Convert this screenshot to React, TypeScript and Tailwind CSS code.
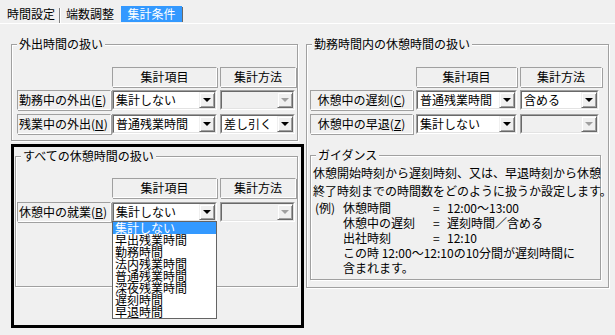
import type { ReactNode } from "react";

function GroupBox({ title, className, children }: { title: string; className: string; children?: ReactNode }) {
  return (
    <div className={`relative border border-[#a0a0a0] shadow-[inset_1px_1px_0_#fff,1px_1px_0_#fff] ${className}`}>
      <span className="absolute left-[5px] -top-[9px] px-[2px] bg-[#f0f0f0] leading-[16px] whitespace-nowrap">{title}</span>
      {children}
    </div>
  );
}

function Cell({ children, className }: { children?: ReactNode; className: string }) {
  return (
    <div
      className={`h-[20px] flex items-center border border-t-[#a0a0a0] border-l-[#a0a0a0] border-b-white border-r-white shadow-[1px_1px_0_#a0a0a0] leading-[16px] whitespace-nowrap ${className}`}
    >
      {children}
    </div>
  );
}

function Select({ value, disabled, className, children }: { value?: string; disabled?: boolean; className: string; children?: ReactNode }) {
  return (
    <div className={`relative h-[20px] border border-t-[#a0a0a0] border-l-[#a0a0a0] border-b-white border-r-white ${className}`}>
      <div
        className={`h-full flex items-center border border-t-[#696969] border-l-[#696969] border-b-[#e3e3e3] border-r-[#e3e3e3] ${disabled ? "bg-[#f0f0f0]" : "bg-white"}`}
      >
        <span className="flex-1 pl-[2px] leading-[16px] whitespace-nowrap overflow-hidden">{value}</span>
        <div className="w-[16px] h-full flex items-center justify-center bg-[#f0f0f0] border border-t-[#f0f0f0] border-l-[#f0f0f0] border-b-[#696969] border-r-[#696969] shadow-[inset_1px_1px_0_#fff,inset_-1px_-1px_0_#a0a0a0]">
          <div
            className={`w-0 h-0 border-x-[4px] border-x-transparent border-t-[4px] ${disabled ? "border-t-[#a0a0a0]" : "border-t-black"}`}
          />
        </div>
      </div>
      {children}
    </div>
  );
}

const options = ["集計しない", "早出残業時間", "勤務時間", "法内残業時間", "普通残業時間", "深夜残業時間", "遅刻時間", "早退時間"];

export default function App() {
  return (
    <div className="w-[615px] h-[335px] bg-[#f0f0f0] text-[12px] text-black overflow-hidden [font-family:'Noto_Sans_CJK_JP','Noto_Sans_CJK_SC',sans-serif]">
      {/* tabs */}
      <div className="h-[24px] border-b border-white flex items-start pt-[6px] pl-[3px]">
        <div className="h-[16px] px-[4px] leading-[16px]">時間設定</div>
        <div className="w-[2px] h-[15px] mt-[2px] border-l border-[#808080] bg-white" />
        <div className="h-[16px] pl-[5px] pr-[5px] leading-[16px]">端数調整</div>
        <div className="h-[16px] w-[61px] ml-[2px] bg-[#3399ff] text-white text-center leading-[16px]">集計条件</div>
        <div className="w-[1px] h-[15px] mt-[1px] bg-[#696969]" />
      </div>

      <div className="flex pl-[11px]">
        {/* left column */}
        <div className="w-[293px] flex flex-col">
          <GroupBox title="外出時間の扱い" className="w-[287px] h-[97px] mt-[20px] pt-[22px] pl-[5px]">
            <div className="flex">
              <div className="w-[95px]" />
              <Cell className="w-[105px] justify-center">集計項目</Cell>
              <Cell className="w-[76px] ml-[3px] justify-center">集計方法</Cell>
            </div>
            <div className="flex mt-[3px]">
              <Cell className="w-[94px] pl-[1px]">
                勤務中の外出(<u>E</u>)
              </Cell>
              <Select value="集計しない" className="w-[105px] ml-[1px]" />
              <Select disabled className="w-[75px] ml-[3px]" />
            </div>
            <div className="flex mt-[4px]">
              <Cell className="w-[94px] pl-[1px]">
                残業中の外出(<u>N</u>)
              </Cell>
              <Select value="普通残業時間" className="w-[105px] ml-[1px]" />
              <Select value="差し引く" className="w-[75px] ml-[3px]" />
            </div>
          </GroupBox>

          <div className="mt-[3px] h-[184px] border-[3px] border-black">
            <GroupBox title="すべての休憩時間の扱い" className="w-[283px] h-[131px] mt-[9px] ml-[1px] pt-[21px] pl-[1px]">
              <div className="flex">
                <div className="w-[95px]" />
                <Cell className="w-[105px] justify-center">集計項目</Cell>
                <Cell className="w-[76px] ml-[3px] justify-center">集計方法</Cell>
              </div>
              <div className="flex mt-[4px]">
                <Cell className="w-[94px] pl-[1px]">
                  休憩中の就業(<u>B</u>)
                </Cell>
                <Select value="集計しない" className="w-[105px] ml-[1px]">
                  <div className="absolute z-10 left-[-1px] top-[18px] w-[105px] bg-white border border-[#646464] py-0">
                    {options.map((o, i) => (
                      <div
                        key={o}
                        className={`h-[12px] leading-[12px] pl-[2px] whitespace-nowrap ${i === 0 ? "bg-[#3399ff] text-white" : ""}`}
                      >
                        {o}
                      </div>
                    ))}
                  </div>
                </Select>
                <Select disabled className="w-[75px] ml-[3px]" />
              </div>
            </GroupBox>
          </div>
        </div>

        {/* right column */}
        <div className="ml-[2px] w-[303px]">
          <GroupBox title="勤務時間内の休憩時間の扱い" className="w-[303px] h-[244px] mt-[20px] pt-[22px] pl-[3px]">
            <div className="flex">
              <div className="w-[106px]" />
              <Cell className="w-[101px] justify-center">集計項目</Cell>
              <Cell className="w-[82px] ml-[3px] justify-center">集計方法</Cell>
            </div>
            <div className="flex mt-[3px]">
              <Cell className="w-[103px] justify-center">
                休憩中の遅刻(<u>C</u>)
              </Cell>
              <Select value="普通残業時間" className="w-[101px] ml-[3px]" />
              <Select value="含める" className="w-[79px] ml-[3px]" />
            </div>
            <div className="flex mt-[4px]">
              <Cell className="w-[103px] justify-center">
                休憩中の早退(<u>Z</u>)
              </Cell>
              <Select value="集計しない" className="w-[101px] ml-[3px]" />
              <Select disabled className="w-[79px] ml-[3px]" />
            </div>

            <GroupBox title="ガイダンス" className="w-[291px] h-[125px] mt-[21px] pt-[8px] pl-[2px]">
              <p className="leading-[18px] whitespace-nowrap">
                休憩開始時刻から遅刻時刻、又は、早退時刻から休憩
                <br />
                終了時刻までの時間数をどのように扱うか設定します。
              </p>
              <div className="leading-[15px] whitespace-nowrap">
                <div className="flex">
                  <span className="w-[30px] pl-[2px]">(例)</span>
                  <span className="w-[90px]">休憩時間</span>
                  <span className="w-[14px]">=</span>
                  <span>12:00～13:00</span>
                </div>
                <div className="flex pl-[30px]">
                  <span className="w-[90px]">休憩中の遅刻</span>
                  <span className="w-[14px]">=</span>
                  <span>遅刻時間／含める</span>
                </div>
                <div className="flex pl-[30px]">
                  <span className="w-[90px]">出社時刻</span>
                  <span className="w-[14px]">=</span>
                  <span>12:10</span>
                </div>
                <div className="pl-[30px]">この時 12:00～12:10の10分間が遅刻時間に</div>
                <div className="pl-[30px]">含まれます。</div>
              </div>
            </GroupBox>
          </GroupBox>
        </div>
      </div>
    </div>
  );
}
